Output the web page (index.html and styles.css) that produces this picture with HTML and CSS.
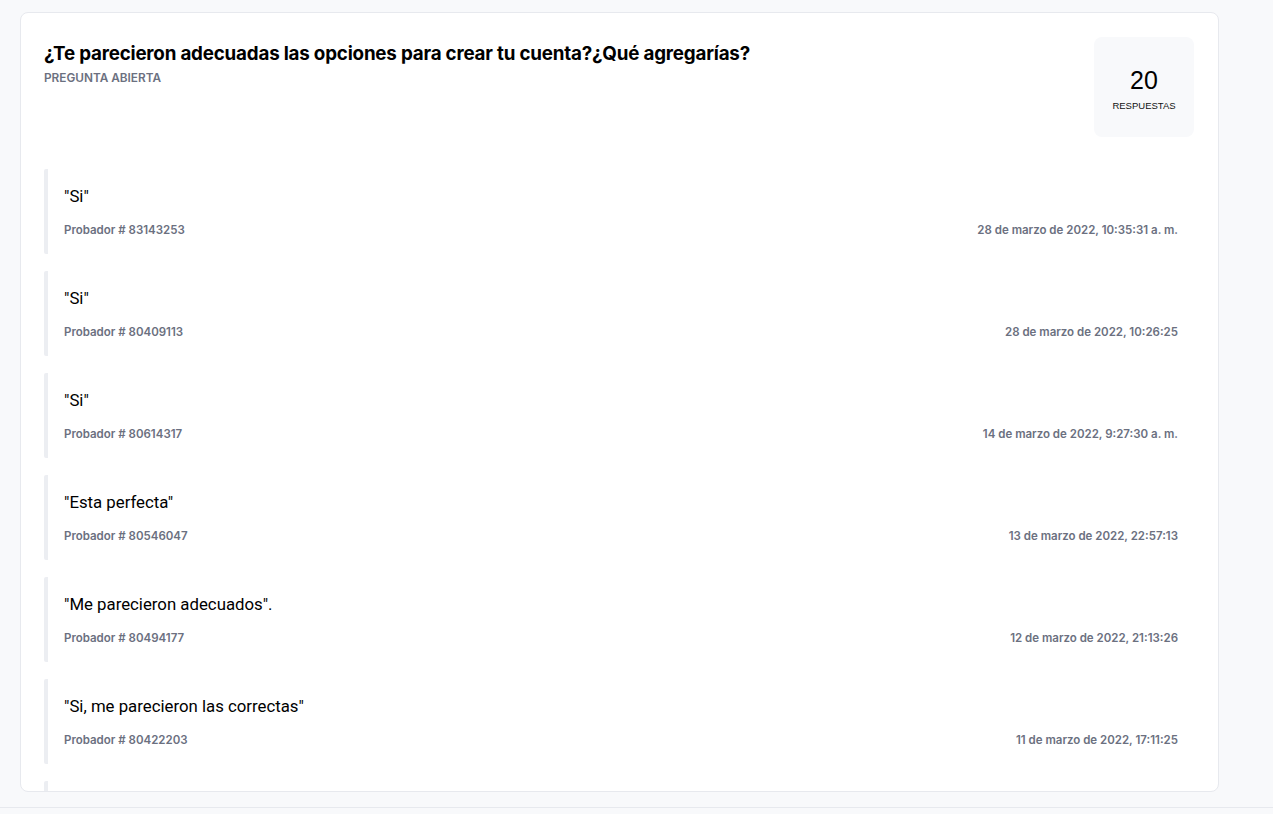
FILE: index.html
```html
<!DOCTYPE html>
<html lang="es">
<head>
<meta charset="utf-8">
<title>Pregunta abierta</title>
<link rel="stylesheet" href="styles.css">
</head>
<body>
<div class="page">
  <section class="card">
    <header class="head">
      <div class="head-text">
        <h1 class="title">¿Te parecieron adecuadas las opciones para crear tu cuenta?¿Qué agregarías?</h1>
        <div class="subtitle">PREGUNTA ABIERTA</div>
      </div>
      <div class="count">
        <div class="count-num">20</div>
        <div class="count-label">RESPUESTAS</div>
      </div>
    </header>
    <ul class="list">
      <li class="item"><p class="answer">"Si"</p><div class="meta"><span>Probador # 83143253</span><span>28 de marzo de 2022, 10:35:31 a. m.</span></div></li>
      <li class="item"><p class="answer">"Si"</p><div class="meta"><span>Probador # 80409113</span><span>28 de marzo de 2022, 10:26:25</span></div></li>
      <li class="item"><p class="answer">"Si"</p><div class="meta"><span>Probador # 80614317</span><span>14 de marzo de 2022, 9:27:30 a. m.</span></div></li>
      <li class="item"><p class="answer">"Esta perfecta"</p><div class="meta"><span>Probador # 80546047</span><span>13 de marzo de 2022, 22:57:13</span></div></li>
      <li class="item"><p class="answer">"Me parecieron adecuados".</p><div class="meta"><span>Probador # 80494177</span><span>12 de marzo de 2022, 21:13:26</span></div></li>
      <li class="item"><p class="answer">"Si, me parecieron las correctas"</p><div class="meta"><span>Probador # 80422203</span><span>11 de marzo de 2022, 17:11:25</span></div></li>
      <li class="item item-stub"></li>
    </ul>
  </section>
</div>
<div class="footer"></div>
</body>
</html>
```
FILE: styles.css
```css
html, body {
  margin: 0;
  padding: 0;
  background: #f8f9fb;
  font-family: Inter, "Liberation Sans", sans-serif;
  color: #0b0b0b;
}
.page {
  padding: 12px 54px 0 20px;
}
.card {
  box-sizing: border-box;
  height: 780px;
  background: #ffffff;
  border: 1px solid #e7e9ee;
  border-radius: 8px;
  padding: 24px 24px 0 23px;
  overflow: hidden;
}
.head {
  display: flex;
  justify-content: space-between;
  align-items: flex-start;
}
.head-text {
  padding-top: 4px;
}
.title {
  margin: 0;
  font-size: 18.8px;
  line-height: 26px;
  font-weight: 700;
  letter-spacing: -0.2px;
  color: #000;
}
.subtitle {
  margin-top: 4px;
  font-size: 11.8px;
  line-height: 14px;
  font-weight: 600;
  color: #6b7080;
}
.count {
  width: 100px;
  height: 100px;
  box-sizing: border-box;
  padding-top: 29px;
  background: #f8f9fb;
  border-radius: 8px;
  display: flex;
  flex-direction: column;
  align-items: center;
}
.count-num {
  font-family: "Liberation Sans", Arial, sans-serif;
  font-size: 25px;
  line-height: 28px;
  color: #000;
}
.count-label {
  font-family: "Liberation Sans", Arial, sans-serif;
  font-size: 9.5px;
  line-height: 12px;
  margin-top: 6px;
  color: #111;
}
.list {
  list-style: none;
  margin: 32px 0 0 0;
  padding: 0;
  display: flex;
  flex-direction: column;
  gap: 17px;
}
.item {
  border-left: 4px solid #eceef2;
  border-radius: 2px;
  padding: 15px 16px 16px 16px;
}
.item-stub {
  height: 54px;
}
.answer {
  margin: 0;
  font-family: Roboto, "Liberation Sans", sans-serif;
  font-size: 16.8px;
  line-height: 24px;
  color: #000;
}
.meta {
  margin-top: 14px;
  display: flex;
  justify-content: space-between;
  font-size: 11.5px;
  line-height: 16px;
  font-weight: 600;
  color: #6b7080;
}
.footer {
  margin-top: 15px;
  border-top: 1px solid #e7e9ee;
  height: 6px;
}
```
